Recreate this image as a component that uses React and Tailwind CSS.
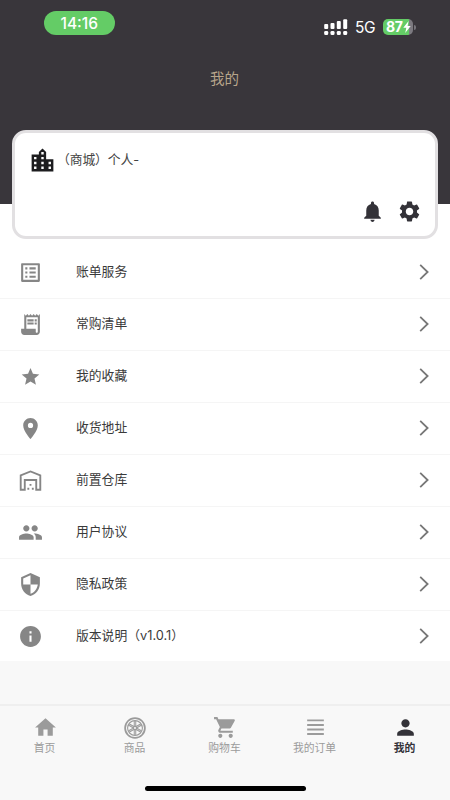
import {
  MdGroup,
  MdHome,
  MdInfo,
  MdListAlt,
  MdLocationCity,
  MdLocationOn,
  MdNotifications,
  MdPerson,
  MdSecurity,
  MdSettings,
  MdShoppingCart,
} from "react-icons/md";

const StarIcon = ({ className }) => (
  <svg viewBox="0 0 24 24" fill="currentColor" className={className}>
    <path d="M12 3.8l2.35 5.65 6.1.52-4.63 4.01 1.39 5.96L12 16.78l-5.21 3.16 1.39-5.96-4.63-4.01 6.1-.52z" />
  </svg>
);

const ReceiptIcon = ({ className }) => (
  <svg viewBox="0 0 24 24" fill="currentColor" className={className}>
    <path d="M19.5 3.5 18 2l-1.5 1.5L15 2l-1.5 1.5L12 2l-1.5 1.5L9 2 7.5 3.5 6 2v14H3v3c0 1.66 1.34 3 3 3h12c1.66 0 3-1.34 3-3V2zM19 19c0 .55-.45 1-1 1s-1-.45-1-1v-3H8V5h11z" />
    <path d="M9 7h6v2H9zM16 7h2v2h-2zM9 10h6v2H9zM16 10h2v2h-2zM4.5 17h12v3.5h-12z" />
  </svg>
);

const WarehouseIcon = ({ className }) => (
  <svg viewBox="0 0 24 24" fill="none" stroke="currentColor" strokeWidth="1.8" className={className}>
    <path d="M2.6 20.9V7L12 3.3 21.4 7v13.9h-3.9v-9.4h-11v9.4z" />
    <path
      d="M11.1 15.3h1.8v1.8h-1.8zM9 19h1.8v1.8H9zM13.3 19h1.8v1.8h-1.8z"
      fill="currentColor"
      stroke="none"
    />
  </svg>
);

const WheelIcon = ({ className }) => (
  <svg viewBox="0 0 24 24" fill="none" stroke="currentColor" className={className}>
    <circle cx="12" cy="12" r="10.8" strokeWidth="1.9" />
    <circle cx="12" cy="12" r="8.1" strokeWidth="1.2" />
    <circle cx="12" cy="12" r="1.8" strokeWidth="1.4" />
    <path
      strokeWidth="1.1"
      d="M11.2 10V4M12.8 10V4M11.2 14v6M12.8 14v6M9.9 11.7 4.7 8.7M10.7 10.3 5.5 7.3M14.1 11.7l5.2-3M13.3 10.3l5.2-3M9.9 12.3l-5.2 3M10.7 13.7l-5.2 3M14.1 12.3l5.2 3M13.3 13.7l5.2 3"
    />
  </svg>
);

const OrdersIcon = ({ className }) => (
  <svg viewBox="0 0 24 24" fill="currentColor" className={className}>
    <path d="M4 4.2h16v1.9H4zM4 8.6h16v1.9H4zM4 13h16v1.9H4zM4 17.3h16v1.9H4z" />
  </svg>
);

const ChevronIcon = () => (
  <svg viewBox="0 0 10 16" fill="none" stroke="#777" strokeWidth="1.8" className="h-4 w-2.5">
    <path d="M1.2 0.9 8.6 8l-7.4 7.1" />
  </svg>
);

const menuItems = [
  { label: "账单服务", icon: MdListAlt },
  { label: "常购清单", icon: ReceiptIcon },
  { label: "我的收藏", icon: StarIcon },
  { label: "收货地址", icon: MdLocationOn },
  { label: "前置仓库", icon: WarehouseIcon },
  { label: "用户协议", icon: MdGroup },
  { label: "隐私政策", icon: MdSecurity },
  { label: "版本说明（v1.0.1）", icon: MdInfo },
];

const tabs = [
  { label: "首页", icon: MdHome },
  { label: "商品", icon: WheelIcon },
  { label: "购物车", icon: MdShoppingCart },
  { label: "我的订单", icon: OrdersIcon },
  { label: "我的", icon: MdPerson, active: true },
];

const StatusBar = () => (
  <div className="flex h-[52px] items-start justify-between pr-[34px] pl-[43.5px] text-white">
    <div className="mt-[11px] flex h-6 w-[71.5px] items-center justify-center rounded-full bg-[#64cc66] pt-px text-[15.5px] font-medium">
      14:16
    </div>
    <div className="mt-[18px] flex h-[18px] items-center">
      <svg viewBox="0 0 24 16" fill="currentColor" className="h-4 w-6">
        <rect x="0.2" y="5" width="4" height="5" rx="1" />
        <rect x="6.5" y="4" width="4" height="6" rx="1" />
        <rect x="12.8" y="2" width="4" height="8" rx="1" />
        <rect x="19.2" y="0.3" width="4" height="9.7" rx="1" />
        <rect x="0.2" y="12" width="4" height="4" rx="1.3" />
        <rect x="6.5" y="12" width="4" height="4" rx="1.3" />
        <rect x="12.8" y="12" width="4" height="4" rx="1.3" />
        <rect x="19.2" y="12" width="4" height="4" rx="1.3" />
      </svg>
      <span className="ml-[7px] w-[21px] pt-0.5 text-[15.5px] leading-none tracking-tight">5G</span>
      <div className="ml-[7px] flex h-4 w-[30px] items-center overflow-hidden rounded-[5px] bg-linear-to-r from-[#64cc66] from-87% to-[#7c7a80] to-87% pl-[3px] text-[14px] leading-none font-bold tracking-tight">
        87
        <svg viewBox="0 0 8 12" fill="currentColor" className="h-3 w-2">
          <path d="M5.6 0 0.3 6.8h3L2.2 12l5.5-7H4.6z" />
        </svg>
      </div>
      <div className="ml-px h-[5px] w-[2px] rounded-r-full bg-[#77757b]" />
    </div>
  </div>
);

const App = () => {
  return (
    <div className="flex h-[800px] w-[450px] flex-col overflow-hidden bg-[#f8f8f8] font-['Inter','Noto_Sans_CJK_SC',sans-serif]">
      {/* Header */}
      <header className="relative z-10 h-[204px] shrink-0 bg-[#39363b]">
        <StatusBar />
        <h1 className="flex h-[53px] items-center justify-center pt-px pr-px text-[14.5px] text-[#b7a58b]">
          我的
        </h1>
        {/* Account card, hangs over the edge of the header */}
        <div className="mx-3 mt-[25px] flex h-[109px] flex-col justify-between rounded-[14px] border-[3px] border-[#e2e0e2] bg-white pt-[13px] pr-[13px] pb-[12px] pl-[12.5px]">
          <div className="flex items-center">
            <MdLocationCity className="size-[29px] text-[#1d1d1f]" />
            <span className="ml-[0.5px] text-[12.8px] leading-none tracking-[-0.1px] text-[#444]">
              （商城）个人-
            </span>
          </div>
          <div className="flex justify-end gap-[12px] text-[#333238]">
            <MdNotifications className="size-[25px]" />
            <MdSettings className="size-[25px]" />
          </div>
        </div>
      </header>

      {/* Menu */}
      <ul className="h-[457px] shrink-0 divide-y divide-[#f5f5f5] bg-white pt-[43px]">
        {menuItems.map(({ label, icon: Icon }) => (
          <li key={label} className="flex h-[52px] items-center pr-[21px] pb-px pl-[17.5px] last:h-[51px]">
            <Icon className="size-[25px] text-[#868686]" />
            <span className="ml-[33.5px] flex-1 text-[12.8px] text-[#3a3a3a]">{label}</span>
            <ChevronIcon />
          </li>
        ))}
      </ul>

      {/* Tab bar */}
      <nav className="mt-[43px] flex h-[96px] shrink-0 flex-col border-t-2 border-[#efefef]">
        <div className="grid flex-1 grid-cols-5 pt-[9px]">
          {tabs.map(({ label, icon: Icon, active }) => (
            <div
              key={label}
              className={`flex flex-col items-center pr-px ${active ? "text-[#333238]" : "text-[#9b9b9b]"}`}
            >
              <span className="ml-px flex size-[25px] items-center justify-center">
                <Icon className={Icon === WheelIcon ? "size-[22px]" : "size-[25px]"} />
              </span>
              <span className={`mt-px text-[10.8px] leading-4 ${active ? "font-bold" : ""}`}>{label}</span>
            </div>
          ))}
        </div>
        <div className="mx-auto mb-[9px] h-[5px] w-[161px] rounded-full bg-black" />
      </nav>
    </div>
  );
};

export default App;
